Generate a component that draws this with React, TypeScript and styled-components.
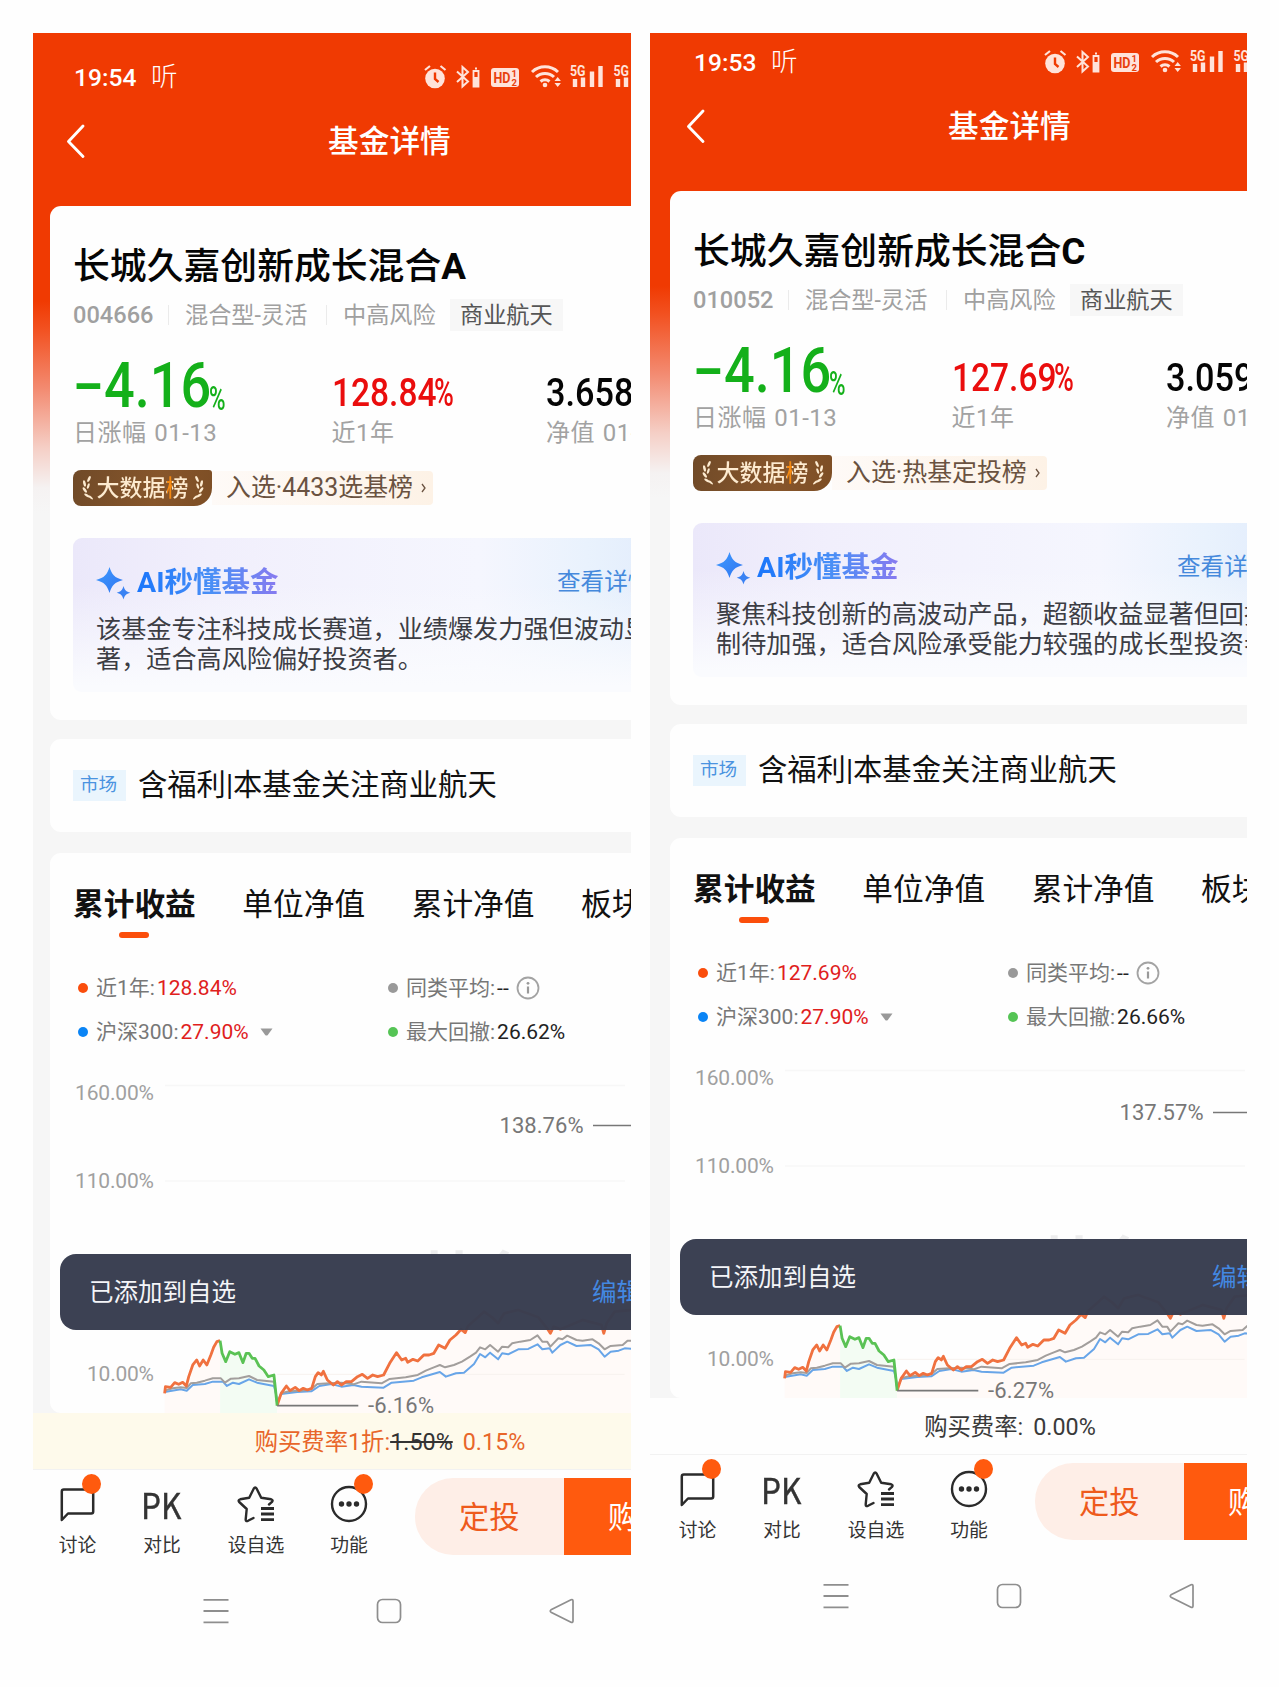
import React from "react";
import styled, { createGlobalStyle, css } from "styled-components";

const GlobalStyle = createGlobalStyle`
  * { box-sizing: border-box; }
  body {
    margin: 0;
    background: #fefefe;
    font-family: Roboto, "Noto Sans CJK SC", sans-serif;
    color: #111;
  }
`;

const Page = styled.main`
  display: flex;
  gap: 19px;
  width: 1279px;
  height: 1687px;
  padding: 33px 0 0 33px;
  overflow: hidden;
`;

const Panel = styled.section<{ $w: number }>`
  width: ${(p) => p.$w}px;
  height: 1640px;
  overflow: hidden;
  flex: none;
`;

const Screen = styled.div<{ $x: number; $y: number }>`
  position: relative;
  width: 720px;
  margin-left: ${(p) => p.$x}px;
  margin-top: ${(p) => p.$y}px;
  white-space: nowrap;
  background: linear-gradient(
    180deg,
    #f03a02 0,
    #f03a02 268px,
    #f2501f 295px,
    #f38a70 355px,
    #f5cfc6 415px,
    #f5f2f2 455px,
    #f6f6f6 480px
  );
`;

const StatusBar = styled.div`
  display: flex;
  align-items: center;
  height: 88px;
  padding-left: 44px;
  color: #fff;
`;

const Clock = styled.span`
  width: 77px;
  font-size: 24.6px;
  font-weight: 500;
`;

const Listen = styled.span`
  width: 269px;
  font-size: 26.5px;
  font-weight: 300;
  line-height: 30px;
`;

const NavBar = styled.header`
  display: flex;
  align-items: center;
  height: 40px;
  margin-bottom: 45px;
  padding-left: 36px;
  color: #fff;
`;

const NavTitle = styled.h1`
  margin: 1px 0 0 242px;
  font-size: 30.7px;
  font-weight: 500;
  line-height: 40px;
`;

const Card = styled.section<{ $h: number; $gap?: number }>`
  height: ${(p) => p.$h}px;
  margin: ${(p) => p.$gap ?? 0}px 0 0 20px;
  padding-left: 23px;
  border-radius: 11px 0 0 11px;
  background: #fefefe;
`;

const FundName = styled.h2`
  margin: 0;
  padding-top: 41px;
  font-size: 36.85px;
  font-weight: 500;
  line-height: 40px;
  color: #050505;
  b { font-weight: 700; }
`;

const Meta = styled.div`
  display: flex;
  align-items: center;
  height: 32px;
  margin-top: 12px;
  font-size: 23.2px;
  color: #a0a0a0;
`;

const Code = styled.span`
  width: 95px;
  font-size: 23.6px;
  font-weight: 500;
`;

const MetaText = styled.span<{ $w: number }>`
  width: ${(p) => p.$w}px;
  padding-left: 16px;
  border-left: 1px solid #ebebeb;
  line-height: 20px;
`;

const MetaTag = styled.span`
  padding: 0 10px;
  line-height: 32px;
  background: #f7f7f7;
  color: #555;
`;

const Stats = styled.div`
  display: flex;
  margin-top: 23px;
`;

const Stat = styled.div<{ $w: number }>`
  width: ${(p) => p.$w}px;
  flex: none;
`;

const Figure = styled.div<{ $color: string }>`
  display: flex;
  align-items: baseline;
  height: 62px;
  line-height: 62px;
  color: ${(p) => p.$color};
  &::before {
    content: "";
    display: inline-block;
    height: 53px;
  }
`;

const Digits = styled.span<{ $size: number; $squeeze: number; $w: number; $weight?: number; $drop?: number }>`
  position: relative;
  top: ${(p) => p.$drop ?? 0}px;
  width: ${(p) => p.$w}px;
  font-size: ${(p) => p.$size}px;
  font-weight: ${(p) => p.$weight ?? 500};
  line-height: 1;
  transform: scaleX(${(p) => p.$squeeze});
  transform-origin: left;
`;

const StatLabel = styled.div`
  margin-top: 2px;
  font-size: 24px;
  line-height: 30px;
  letter-spacing: 0.45px;
  word-spacing: 1.5px;
  color: #a2a2a2;
`;

const RankRow = styled.div`
  display: flex;
  height: 36px;
  margin-top: 22px;
`;

const RankBadge = styled.div`
  display: flex;
  align-items: center;
  justify-content: center;
  gap: 4px;
  width: 139px;
  border-radius: 8px 3px 18px 8px;
  background: linear-gradient(100deg, #704a28, #87562b 60%, #7d4e25);
  color: #fdebd0;
  font-size: 23px;
  font-weight: 500;
  line-height: 34px;
`;

const RankWord = styled.span`
  padding-top: 2px;
  background: linear-gradient(90deg, #fdebd0 0 76%, #f58a12 76% 82%, #fdebd0 82%);
  background-clip: text;
  -webkit-background-clip: text;
  color: transparent;
`;

const RankText = styled.div`
  display: flex;
  align-items: center;
  gap: 8px;
  height: 34px;
  margin-top: 1px;
  padding: 0 6px 0 14px;
  border-radius: 0 4px 4px 0;
  background: linear-gradient(90deg, #fefaf7, #fdf2e6);
  color: #6a5240;
  font-size: 24.9px;
  line-height: 36px;
`;

const AiBox = styled.div`
  height: 154px;
  margin-top: 32px;
  padding: 25px 0 0 23px;
  border-radius: 9px;
  background:
    linear-gradient(180deg, rgba(254, 254, 254, 0) 30%, #fafbfe 96%),
    linear-gradient(90deg, #ebe8fa 0, #f1effc 20%, #f5f6fe 60%, #e9f2fd 76%, #e2ecfc 87%);
`;

const AiHead = styled.div`
  display: flex;
  align-items: center;
  height: 40px;
`;

const AiTitle = styled.h3`
  width: 420px;
  margin: 0 0 0 6px;
  font-size: 28.5px;
  font-weight: 700;
  line-height: 40px;
  background: linear-gradient(90deg, #1a76fb, #4a8ff6 75px, #8b79ef 145px);
  background-clip: text;
  -webkit-background-clip: text;
  color: transparent;
`;

const AiMore = styled.span`
  margin-bottom: 3px;
  font-size: 23.6px;
  line-height: 36px;
  color: #4589dc;
`;

const AiText = styled.p`
  margin: 12px 0 0;
  font-size: 25.15px;
  line-height: 30px;
  color: #3c3d44;
`;

const MarketCard = styled(Card)`
  display: flex;
  align-items: center;
  gap: 12px;
  font-size: 29.3px;
  line-height: 39px;
`;

const MarketTag = styled.span`
  width: 53px;
  padding-right: 2px;
  font-size: 18.6px;
  line-height: 31px;
  text-align: center;
  color: #4a93e0;
  background: #eaf5fd;
`;

const Tabs = styled.div`
  display: flex;
  gap: 46.6px;
  padding-top: 32px;
`;

const Tab = styled.div<{ $active?: boolean }>`
  height: 53px;
  font-size: 30.7px;
  line-height: 40px;
  ${(p) =>
    p.$active &&
    css`
      font-weight: 700;
      &::after {
        content: "";
        display: block;
        width: 30px;
        height: 6px;
        margin: 7px auto 0;
        border-radius: 3px;
        background: #fb4e0b;
      }
    `}
`;

const Legend = styled.div`
  display: grid;
  grid-template-columns: 310px 1fr;
  grid-auto-rows: 44px;
  margin-top: 28px;
  padding-left: 5px;
`;

const LegendItem = styled.div<{ $dot: string }>`
  display: flex;
  align-items: center;
  font-size: 21px;
  line-height: 28px;
  color: #777;
  &::before {
    content: "";
    width: 10px;
    height: 10px;
    margin-right: 8px;
    border-radius: 50%;
    background: ${(p) => p.$dot};
  }
  svg { margin-left: 7px; }
`;

const LegendValue = styled.span<{ $color: string }>`
  margin-left: 2px;
  color: ${(p) => p.$color};
`;

const ChartSvg = styled.svg`
  display: block;
  margin-left: -23px;
  text {
    font-family: Roboto, sans-serif;
    font-size: 21px;
    fill: #a0a0a0;
  }
  text.mark {
    font-size: 22px;
    fill: #777;
  }
  text.watermark {
    font-family: "Noto Sans CJK SC", sans-serif;
    font-size: 57px;
    font-weight: 700;
    fill: #ededee;
  }
`;

const Toast = styled.div`
  position: absolute;
  left: 30px;
  top: 1221px;
  display: flex;
  align-items: center;
  width: 660px;
  height: 76px;
  padding-left: 29px;
  border-radius: 16px;
  background: rgba(56, 61, 80, 0.98);
  color: #f4f5f8;
  font-size: 24.5px;
  line-height: 36px;
  padding-top: 2px;
`;

const ToastAction = styled.span`
  margin-left: 356px;
  color: #4388e2;
`;

const FeeBar = styled.div<{ $promo: boolean }>`
  display: flex;
  align-items: center;
  justify-content: center;
  height: 57px;
  padding-top: 2px;
  border-bottom: 1px solid #f2f2f2;
  background: ${(p) => (p.$promo ? "#fefaeb" : "#fefefe")};
  color: ${(p) => (p.$promo ? "#e8662a" : "#3a3a3a")};
  font-size: 23.35px;
  line-height: 34px;
  s { color: #333; }
`;

const FeeRate = styled.span`
  margin-left: 10px;
`;

const ActionBar = styled.div`
  display: flex;
  height: 97px;
  padding-left: 6px;
  background: #fefefe;
`;

const Action = styled.div<{ $w: number }>`
  display: flex;
  flex-direction: column;
  align-items: center;
  width: ${(p) => p.$w}px;
  padding-top: 14px;
  font-size: 18.8px;
  line-height: 24px;
  color: #333;
`;

const ActionIcon = styled.div`
  position: relative;
  display: flex;
  align-items: center;
  justify-content: center;
  height: 40px;
  margin-bottom: 10px;
  svg { display: block; }
`;

const PkMark = styled.span`
  width: 42px;
  font-family: "Noto Sans CJK SC", sans-serif;
  font-size: 35.5px;
  line-height: 38px;
  margin-bottom: 1px;
  -webkit-text-stroke: 0.4px #333;
  transform: scaleX(0.89);
  transform-origin: left;
`;

const RedDot = styled.i<{ $right: number }>`
  position: absolute;
  right: ${(p) => p.$right}px;
  top: -10px;
  width: 19px;
  height: 20px;
  border-radius: 50%;
  background: #ff5a0e;
`;

const BuyGroup = styled.div`
  display: flex;
  width: 320px;
  height: 77px;
  margin: 8px 0 0 24px;
  border-radius: 38px;
  overflow: hidden;
  font-size: 30.3px;
  line-height: 79px;
`;

const PlanButton = styled.div`
  width: 149px;
  padding-left: 44px;
  background: #feeee7;
  color: #ee5a1c;
`;

const BuyButton = styled.div`
  flex: 1;
  padding-left: 44px;
  background: #ff5a0e;
  color: #fff;
`;

const SystemNav = styled.div`
  display: grid;
  grid-template-columns: repeat(3, 173.3px);
  place-items: center;
  height: 88px;
  padding-left: 99px;
  background: #fefefe;
`;

const ICON = "#ffe3da";

const StatusIcons = () => (
  <svg width="240" height="30" viewBox="420 62 240 30" fill="none">
    <circle cx="435" cy="78.5" r="9.8" fill={ICON} />
    <path d="M435 72.5v6.5l3.5 3" stroke="#f03a02" strokeWidth="2.4" />
    <path d="M425 70l5-4M445.500 70l-5-4" stroke={ICON} strokeWidth="2.2" />
    <path d="M457 71.500l11 10-5.500 5V67l5.500 5-11 10" stroke={ICON} strokeWidth="2" />
    <path d="M473.500 71h5v15.500h-5zM475 68.500h2" stroke={ICON} strokeWidth="1.8" />
    <rect x="473" y="77" width="6" height="10" fill={ICON} />
    <rect x="491" y="68" width="28" height="19" rx="3" fill={ICON} />
    <g fill="#e8400d" fontFamily="Roboto, sans-serif" fontWeight="700">
      <text x="493.500" y="83" fontSize="15" textLength="17" lengthAdjust="spacingAndGlyphs">HD</text>
      <text x="511.500" y="77" fontSize="9.500">1</text>
      <text x="511.500" y="86" fontSize="9.500">2</text>
    </g>
    <path d="M532 72a19 19 0 0 1 26 0M536 77a13 13 0 0 1 18 0M540.500 81.500a7 7 0 0 1 9 0" stroke={ICON} strokeWidth="3" />
    <circle cx="545" cy="85" r="2.300" fill={ICON} />
    <path d="M554.500 81l3.200-4 3.200 4zM554.500 83l3.200 4 3.200-4z" fill={ICON} />
    <g fill={ICON} fontFamily="Roboto, sans-serif" fontWeight="700" fontSize="14.500">
      <text x="570" y="75.500" textLength="15.500" lengthAdjust="spacingAndGlyphs">5G</text>
      <text x="613.500" y="75.500" textLength="15.500" lengthAdjust="spacingAndGlyphs">5G</text>
    </g>
    <path d="M575 79v8M583 77.500v9.500M592 71.500V87M600.500 66V87M618 79v8M626 77.500v9.500" stroke={ICON} strokeWidth="4.400" />
  </svg>
);

const BackIcon = () => (
  <svg width="20" height="36" viewBox="0 0 20 36" fill="none">
    <path d="M17 3L2.500 18.500l14.500 15" stroke="#fff" strokeWidth="2.900" strokeLinecap="round" strokeLinejoin="round" />
  </svg>
);

const Laurel = ({ flip }: { flip?: boolean }) => (
  <svg width="11" height="26" viewBox="0 0 11 26">
    <g fill="#fdebd0" transform={flip ? "translate(11 0) scale(-1 1)" : undefined}>
      <ellipse cx="7" cy="4" rx="1.300" ry="3.200" transform="rotate(25 7 4)" />
      <ellipse cx="2.500" cy="8.500" rx="1.300" ry="3.200" transform="rotate(-12 2.500 8.500)" />
      <ellipse cx="6.300" cy="11" rx="1.100" ry="2.800" transform="rotate(20 6.300 11)" />
      <ellipse cx="2.800" cy="15" rx="1.300" ry="3.200" transform="rotate(-35 2.800 15)" />
      <ellipse cx="5" cy="20.500" rx="1.200" ry="3.200" transform="rotate(-58 5 20.500)" />
      <ellipse cx="8.800" cy="22.500" rx="1" ry="2.600" transform="rotate(-50 8.800 22.500)" />
    </g>
  </svg>
);

const SparkIcon = ({ id }: { id: string }) => (
  <svg width="35" height="34" viewBox="0 0 35 34">
    <defs>
      <linearGradient id={id} x1="0" y1="0" x2="1" y2="1">
        <stop offset="0" stopColor="#3f9bff" />
        <stop offset="1" stopColor="#2f74f0" />
      </linearGradient>
    </defs>
    <path d="M13.500 1c2.500 8 5 10.500 13.500 13-8.500 2.500-11 5-13.500 13C11 19 8.500 16.500 0 14 8.500 11.500 11 9 13.500 1z" fill={`url(#${id})`} />
    <path d="M27.500 20c1.300 4.300 2.500 5.500 6.800 6.800-4.300 1.300-5.500 2.500-6.800 6.800-1.300-4.300-2.500-5.500-6.800-6.800 4.300-1.300 5.500-2.500 6.800-6.800z" fill="#3a82f3" />
  </svg>
);

const InfoIcon = () => (
  <svg width="24" height="24" viewBox="0 0 24 24" fill="none">
    <circle cx="12" cy="12" r="10.500" stroke="#a3a3a3" strokeWidth="1.800" />
    <path d="M12 10.500v7" stroke="#999" strokeWidth="2.200" />
    <circle cx="12" cy="7.300" r="1.400" fill="#999" />
  </svg>
);

const CaretIcon = () => (
  <svg width="22" height="8" viewBox="0 0 22 8">
    <path d="M4.500 0.500h12L11.800 7q-1.300 1-2.600 0z" fill="#999" />
  </svg>
);

const ChatIcon = () => (
  <svg width="35" height="36" viewBox="0 0 35 36" fill="none" stroke="#2b2b2b" strokeWidth="2.500" strokeLinejoin="round">
    <path d="M1.800 34V5.500q0-2 2-2h27.400q2 0 2 2v20q0 2-2 2H8z" />
  </svg>
);

const StarIcon = () => (
  <svg width="40" height="38" viewBox="0 0 40 38" fill="none" stroke="#2b2b2b" strokeWidth="2.400" strokeLinejoin="round" strokeLinecap="round">
    <path d="M17.500 33l-5.500 2.800q-2.500 1-2.300-1.500l1-10.300-7.500-7q-1.500-2 1-2.700l9-1.600 4.500-9q1.500-2.400 3 0l4.500 9 10 1.600q2.300.7.800 2.600L33 19.500" />
    <path d="M25 23.500h13M25 29h13M25 34.700h13" strokeWidth="2.800" strokeLinecap="butt" />
  </svg>
);

const MoreIcon = () => (
  <svg width="38" height="38" viewBox="0 0 38 38" fill="none">
    <circle cx="19" cy="19" r="17" stroke="#2b2b2b" strokeWidth="2.400" />
    <g fill="#2b2b2b">
      <circle cx="11.500" cy="19" r="2.700" />
      <circle cx="19" cy="19" r="2.700" />
      <circle cx="26.500" cy="19" r="2.700" />
    </g>
  </svg>
);

const RISE_1 = "360,490 362,470 375,472 385,458 395,463 405,457 414,468 420,440 430,405 440,390 447,408 456,390 465,405 475,375 482,352 490,335 498,332";
const DRAWDOWN = "498,332 503,370 512,395 522,365 535,373 545,368 555,398 563,370 570,370 578,385 585,385 595,408 607,420 618,440 632,435 636,480 640,527";
const RISE_2 =
  "640,527 650,490 663,468 672,482 685,472 695,482 705,475 715,480 726,475 735,440 742,428 750,435 755,424 765,450 780,465 790,455 800,465 812,455 825,455 840,440 852,433 865,445 878,435 890,440 905,435 920,400 937,368 950,390 960,385 965,397 978,388 990,393 1005,375 1018,375 1030,370 1042,345 1058,355 1070,330 1085,315 1098,298 1108,308 1115,288 1140,262 1155,245 1175,262 1190,280 1205,250 1240,240 1290,262 1312,295 1320,310 1328,290 1345,298 1400,270 1447,285 1453,310 1460,280 1480,245 1521,240 1568,230";
const PEERS =
  "360,482 380,475 400,472 415,474 425,460 440,458 460,452 480,445 500,445 510,458 525,446 545,445 570,438 590,450 632,455 636,482 640,520 650,490 670,484 700,482 725,478 740,462 770,460 800,458 830,463 850,455 900,460 920,447 960,442 990,435 1010,422 1030,412 1045,405 1058,412 1080,405 1100,395 1120,380 1135,368 1145,352 1158,358 1170,345 1190,365 1200,350 1215,352 1225,340 1245,335 1270,330 1288,316 1300,335 1312,335 1320,350 1340,325 1350,328 1362,317 1385,330 1400,332 1425,328 1440,340 1455,358 1470,348 1500,345 1512,332 1530,332 1568,325";
const INDEX300 =
  "360,486 400,478 415,482 430,465 460,462 480,455 505,455 515,468 530,458 545,462 570,448 590,458 632,468 637,490 640,520 650,492 690,486 725,484 745,468 775,462 800,470 830,465 850,470 905,473 925,458 980,452 1000,442 1045,426 1060,440 1085,430 1105,428 1130,402 1145,372 1158,382 1170,368 1190,388 1200,370 1215,373 1240,358 1265,357 1288,343 1300,358 1318,355 1325,368 1345,345 1362,335 1385,348 1420,345 1440,358 1455,380 1470,365 1490,362 1505,355 1530,357 1568,350";

const line = { fill: "none", strokeLinejoin: "round" as const, vectorEffect: "non-scaling-stroke" };

const Chart = ({ high, low, highY }: { high: string; low: string; highY: number }) => (
  <ChartSvg width="700" height="359" viewBox="0 0 700 359">
    <path d="M115 31.500H575M115 127H575" stroke="#f7f7f7" strokeWidth="1.500" />
    <text x="25" y="46" textLength="79">160.00%</text>
    <text x="25" y="134" textLength="79">110.00%</text>
    <text x="37" y="327" textLength="67">10.00%</text>
    <text className="mark" x="449.500" y={highY + 7} textLength="84">{high}</text>
    <path d={`M543 ${highY}H600`} stroke="#777" strokeWidth="1.700" />
    <text className="watermark" x="254" y="245">天天基金</text>
    <svg x="106.600" y="249.300" width="493.400" height="110.700" viewBox="340 220 1228 332" preserveAspectRatio="none">
      <polygon points={`${RISE_1} 498,552 360,552`} fill="#fffaf8" />
      <polygon points={`${DRAWDOWN} 640,552 498,552`} fill="#f3fcf3" />
      <polygon points={`${RISE_2} 1568,552 640,552`} fill="#fffaf8" />
      <path d="M640 433H1505" stroke="#f7f2ee" strokeWidth="1" {...line} />
      <polyline points={INDEX300} stroke="#68a5e8" strokeWidth="2" {...line} />
      <polyline points={PEERS} stroke="#a29e9c" strokeWidth="2" {...line} />
      <polyline points={RISE_1} stroke="#f0713f" strokeWidth="2.800" {...line} />
      <polyline points={RISE_2} stroke="#f0713f" strokeWidth="2.800" {...line} />
      <polyline points={DRAWDOWN} stroke="#5ac254" strokeWidth="2.800" {...line} />
      <path d="M640 527H842" stroke="#777" strokeWidth="1.800" {...line} />
    </svg>
    <text className="mark" x="318" y="358.500" textLength="66">{low}</text>
  </ChartSvg>
);

interface Fund {
  time: string;
  suffix: string;
  code: string;
  year: string;
  nav: string;
  rank: string;
  summary: [string, string];
  drawdown: string;
  high: string;
  highY: number;
  low: string;
  promo: boolean;
}

const FUNDS: Fund[] = [
  {
    time: "19:54",
    suffix: "A",
    code: "004666",
    year: "128.84%",
    nav: "3.658",
    rank: "入选·4433选基榜",
    summary: ["该基金专注科技成长赛道，业绩爆发力强但波动显", "著，适合高风险偏好投资者。"],
    drawdown: "26.62%",
    high: "138.76%",
    highY: 71.5,
    low: "-6.16%",
    promo: true,
  },
  {
    time: "19:53",
    suffix: "C",
    code: "010052",
    year: "127.69%",
    nav: "3.059",
    rank: "入选·热基定投榜",
    summary: ["聚焦科技创新的高波动产品，超额收益显著但回撤", "制待加强，适合风险承受能力较强的成长型投资者"],
    drawdown: "26.66%",
    high: "137.57%",
    highY: 73.5,
    low: "-6.27%",
    promo: false,
  },
];

const FundScreen = ({ fund, x, y }: { fund: Fund; x: number; y: number }) => (
  <Screen $x={x} $y={y}>
    <StatusBar>
      <Clock>{fund.time}</Clock>
      <Listen>听</Listen>
      <StatusIcons />
    </StatusBar>
    <NavBar>
      <BackIcon />
      <NavTitle>基金详情</NavTitle>
    </NavBar>

    <Card $h={514}>
      <FundName>
        长城久嘉创新成长混合<b>{fund.suffix}</b>
      </FundName>
      <Meta>
        <Code>{fund.code}</Code>
        <MetaText $w={158}>混合型-灵活</MetaText>
        <MetaText $w={124}>中高风险</MetaText>
        <MetaTag>商业航天</MetaTag>
      </Meta>
      <Stats>
        <Stat $w={258.5}>
          <Figure $color="#14b01a">
            <Digits $size={61} $squeeze={1.5} $w={30.5} $weight={500} $drop={-2}>-</Digits>
            <Digits $size={62.5} $squeeze={0.865} $w={105}>4.16</Digits>
            <Digits $size={34} $squeeze={0.66} $w={22} $weight={500} $drop={3}>%</Digits>
          </Figure>
          <StatLabel>日涨幅 01-13</StatLabel>
        </Stat>
        <Stat $w={214.5}>
          <Figure $color="#ea0d0d">
            <Digits $size={38.5} $squeeze={0.87} $w={102} $drop={-1}>{fund.year.slice(0, -1)}</Digits>
            <Digits $size={38.5} $squeeze={0.7} $w={20} $weight={500} $drop={-1}>%</Digits>
          </Figure>
          <StatLabel>近1年</StatLabel>
        </Stat>
        <Stat $w={140}>
          <Figure $color="#050505">
            <Digits $size={38.5} $squeeze={0.89} $w={120} $drop={-1}>{fund.nav}</Digits>
          </Figure>
          <StatLabel>净值 01-13</StatLabel>
        </Stat>
      </Stats>
      <RankRow>
        <RankBadge>
          <Laurel />
          <RankWord>大数据榜</RankWord>
          <Laurel flip />
        </RankBadge>
        <RankText>
          {fund.rank}
          <svg width="6" height="10" viewBox="0 0 6 10" fill="none">
            <path d="M1 1l3 4-3 4" stroke="#6a5240" strokeWidth="1.300" />
          </svg>
        </RankText>
      </RankRow>
      <AiBox>
        <AiHead>
          <SparkIcon id={`spark-${fund.code}`} />
          <AiTitle>AI秒懂基金</AiTitle>
          <AiMore>查看详情</AiMore>
        </AiHead>
        <AiText>
          {fund.summary[0]}
          <br />
          {fund.summary[1]}
        </AiText>
      </AiBox>
    </Card>

    <MarketCard $h={93} $gap={19}>
      <MarketTag>市场</MarketTag>
      <span>含福利|本基金关注商业航天</span>
    </MarketCard>

    <Card $h={560} $gap={21}>
      <Tabs>
        <Tab $active>累计收益</Tab>
        <Tab>单位净值</Tab>
        <Tab>累计净值</Tab>
        <Tab>板块</Tab>
      </Tabs>
      <Legend>
        <LegendItem $dot="#fa4d0c">
          近1年:<LegendValue $color="#e0201c">{fund.year}</LegendValue>
        </LegendItem>
        <LegendItem $dot="#999">
          同类平均:<LegendValue $color="#222">--</LegendValue>
          <InfoIcon />
        </LegendItem>
        <LegendItem $dot="#0a84f5">
          沪深300:<LegendValue $color="#e0201c">27.90%</LegendValue>
          <CaretIcon />
        </LegendItem>
        <LegendItem $dot="#55c455">
          最大回撤:<LegendValue $color="#222">{fund.drawdown}</LegendValue>
        </LegendItem>
      </Legend>
      <Chart high={fund.high} low={fund.low} highY={fund.highY} />
    </Card>

    <FeeBar $promo={fund.promo}>
      {fund.promo ? (
        <>
          购买费率1折:<s>1.50%</s>
          <FeeRate>0.15%</FeeRate>
        </>
      ) : (
        <>
          购买费率:<FeeRate>0.00%</FeeRate>
        </>
      )}
    </FeeBar>

    <ActionBar>
      <Action $w={83}>
        <ActionIcon>
          <ChatIcon />
          <RedDot $right={-6} />
        </ActionIcon>
        讨论
      </Action>
      <Action $w={86}>
        <ActionIcon>
          <PkMark>PK</PkMark>
        </ActionIcon>
        对比
      </Action>
      <Action $w={102}>
        <ActionIcon>
          <StarIcon />
        </ActionIcon>
        设自选
      </Action>
      <Action $w={84}>
        <ActionIcon>
          <MoreIcon />
          <RedDot $right={-5} />
        </ActionIcon>
        功能
      </Action>
      <BuyGroup>
        <PlanButton>定投</PlanButton>
        <BuyButton>购买</BuyButton>
      </BuyGroup>
    </ActionBar>

    <SystemNav>
      <svg width="26" height="26" viewBox="0 0 26 26" fill="none">
        <path d="M0.500 1.800h25M0.500 13h25M0.500 24.300h25" stroke="#8e8e8e" strokeWidth="1.800" />
      </svg>
      <svg width="26" height="26" viewBox="0 0 26 26" fill="none">
        <rect x="1.500" y="1.500" width="23" height="23" rx="5" stroke="#8e8e8e" strokeWidth="1.700" />
      </svg>
      <svg width="26" height="26" viewBox="0 0 26 26" fill="none">
        <path d="M2 11.800L22 1.800q2-.8 2 1.200v20q0 2-2 1.200L2 14.200q-1.500-1.200 0-2.400z" stroke="#8e8e8e" strokeWidth="1.700" />
      </svg>
    </SystemNav>

    <Toast>
      已添加到自选
      <ToastAction>编辑</ToastAction>
    </Toast>
  </Screen>
);

export default function App() {
  return (
    <>
      <GlobalStyle />
      <Page>
        <Panel $w={598}>
          <FundScreen fund={FUNDS[0]} x={-3} y={0} />
        </Panel>
        <Panel $w={597}>
          <FundScreen fund={FUNDS[1]} x={0} y={-15} />
        </Panel>
      </Page>
    </>
  );
}
